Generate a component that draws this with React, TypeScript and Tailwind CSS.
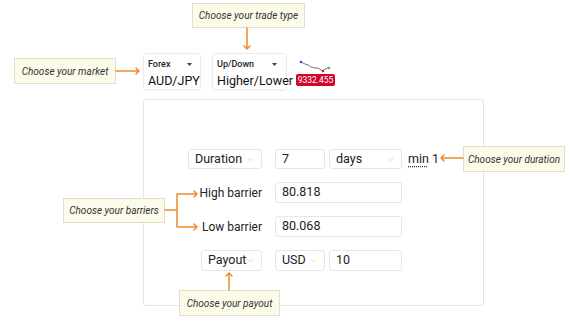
import React from 'react';

const Callout: React.FC<{ text: string; className: string }> = ({ text, className }) => (
  <div
    className={`absolute flex items-center justify-center bg-[#fcfbe9] border border-[#e2dfc9] text-[10px] italic text-[#333] ${className}`}
  >
    {text}
  </div>
);

const Chevron: React.FC = () => (
  <svg width="9" height="9" viewBox="0 0 10 10" className="ml-auto shrink-0">
    <path d="M2 3.5 L5 6.5 L8 3.5" fill="none" stroke="#d6d6d6" strokeWidth="1" />
  </svg>
);

const Caret: React.FC = () => (
  <svg width="5" height="3" viewBox="0 0 5 3">
    <path d="M0 0 L5 0 L2.5 3 Z" fill="#3a3f5a" />
  </svg>
);

const box = 'shrink-0 h-[21px] border border-[#e6e6e6] rounded-[3px] bg-white flex items-center px-[6px] text-[12.5px] text-[#222]';

const App: React.FC = () => (
  <div className="relative w-[580px] h-[326px] bg-white overflow-hidden font-['Roboto',sans-serif]">
    {/* top selectors */}
    <div className="flex items-start pt-[53px] pl-[143px]">
      <div className="w-[58px] h-[37px] border border-[#ececec] rounded-[3px] shadow-[0_1px_2px_rgba(0,0,0,0.05)] px-[4px] pt-[4px]">
        <div className="flex items-center justify-between text-[9px] font-medium text-[#222] pr-[4px]">
          <span>Forex</span>
          <Caret />
        </div>
        <div className="text-[12.5px] text-[#111] leading-[17px]">AUD/JPY</div>
      </div>
      <div className="ml-[11px] w-[75px] h-[37px] border border-[#ececec] rounded-[3px] shadow-[0_1px_2px_rgba(0,0,0,0.05)] px-[4px] pt-[4px]">
        <div className="flex items-center justify-between text-[9px] font-medium text-[#222] pr-[5px]">
          <span>Up/Down</span>
          <Caret />
        </div>
        <div className="text-[12.5px] text-[#111] leading-[17px] whitespace-nowrap">Higher/Lower</div>
      </div>
      <div className="ml-[9px] flex flex-col items-start">
        <svg width="36" height="22" viewBox="0 0 36 22" className="-mb-[1px]">
          <polyline
            points="5,9 9,11 12,12 15,14 19,15 22,15 25,17 27,18 29,16 32,15"
            fill="none"
            stroke="#777"
            strokeWidth="1"
          />
          <circle cx="5" cy="9" r="1.3" fill="#3b4cd6" />
          <circle cx="27" cy="18" r="1.3" fill="#e02020" />
          <circle cx="33" cy="15" r="1.3" fill="#3fcf3f" />
        </svg>
        <div className="h-[12px] w-[39px] bg-[#d2042d] rounded-[2px] text-white text-[8.5px] leading-[12px] text-center whitespace-nowrap">
          9332.455
        </div>
      </div>
    </div>

    {/* main panel */}
    <div className="ml-[143px] mt-[9px] w-[341px] h-[207px] border border-[#e4e4e4] rounded-[3px] pt-[49px] pl-[44px]">
      <div className="grid grid-cols-[74px_127px] gap-x-[13px] gap-y-[13px]">
        <div className={`${box} !h-[20px]`}>
          <span>Duration</span>
          <Chevron />
        </div>
        <div className="flex items-center gap-[4px]">
          <div className={`${box} !h-[20px] w-[50px]`}>7</div>
          <div className={`${box} !h-[20px] w-[73px]`}>
            <span>days</span>
            <Chevron />
          </div>
          <div className="shrink-0 ml-[2px] text-[12.5px] text-[#222] whitespace-nowrap">
            <span className="underline decoration-dotted decoration-[#333] underline-offset-[3px]">min</span> 1
          </div>
        </div>

        <div className="h-[21px] flex items-center justify-end text-[12px] text-[#222]">High barrier</div>
        <div className={box}>80.818</div>

        <div className="h-[21px] flex items-center justify-end text-[12px] text-[#222]">Low barrier</div>
        <div className={box}>80.068</div>

        <div className="flex justify-end">
          <div className={`${box} w-[61px]`}>
            <span>Payout</span>
            <Chevron />
          </div>
        </div>
        <div className="flex items-center gap-[4px]">
          <div className={`${box} w-[50px]`}>
            <span>USD</span>
            <Chevron />
          </div>
          <div className={`${box} w-[73px]`}>10</div>
        </div>
      </div>
    </div>

    {/* annotations */}
    <Callout text="Choose your trade type" className="left-[192px] top-[3px] w-[113px] h-[25px]" />
    <Callout text="Choose your market" className="left-[14px] top-[58px] w-[102px] h-[26px]" />
    <Callout text="Choose your duration" className="left-[463px] top-[146px] w-[102px] h-[26px]" />
    <Callout text="Choose your barriers" className="left-[63px] top-[198px] w-[102px] h-[25px]" />
    <Callout text="Choose your payout" className="left-[179px] top-[290px] w-[101px] h-[26px]" />

    <svg className="absolute left-0 top-0 pointer-events-none" width="580" height="326">
      <g fill="none" stroke="#f08a2c" strokeWidth="1.5" strokeLinecap="round" strokeLinejoin="round">
        <path d="M247 28 V49 M244 46 L247 49 L250 46" />
        <path d="M116 71 H139 M136 68 L139 71 L136 74" />
        <path d="M463 158 H441 M444 155 L441 158 L444 161" />
        <path d="M165 210 H177 M177 194 V227 M177 194 H197 M194 191 L197 194 L194 197 M177 227 H197 M194 224 L197 227 L194 230" />
        <path d="M229 290 V273 M226 276 L229 273 L232 276" />
      </g>
    </svg>
  </div>
);

export default App;
